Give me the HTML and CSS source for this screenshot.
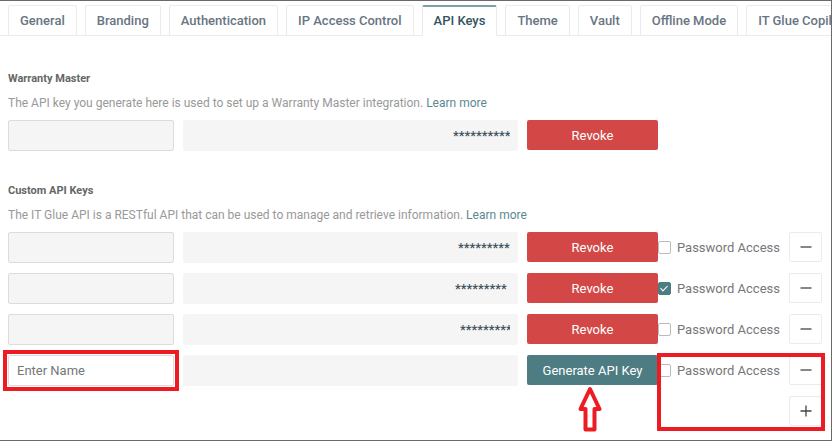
FILE: index.html
```html
<!DOCTYPE html>
<html lang="en">
<head>
  <meta charset="UTF-8">
  <meta name="viewport" content="width=device-width, initial-scale=1.0">
  <title>API Keys - Account Settings</title>
  <link rel="stylesheet" href="styles.css">
</head>
<body>

<nav class="tabs">
  <a class="tab" href="#">General</a>
  <a class="tab" href="#">Branding</a>
  <a class="tab" href="#">Authentication</a>
  <a class="tab" href="#">IP Access Control</a>
  <a class="tab active" href="#">API Keys</a>
  <a class="tab" href="#">Theme</a>
  <a class="tab" href="#">Vault</a>
  <a class="tab" href="#">Offline Mode</a>
  <a class="tab" href="#">IT Glue Copilot</a>
</nav>

<main class="content">
  <section class="section">
    <h2>Warranty Master</h2>
    <p>The API key you generate here is used to set up a Warranty Master integration. <a href="#">Learn more</a></p>
    <div class="key-row">
      <input class="name" type="text" aria-label="Key name" disabled>
      <div class="key"><span class="mask mask-57">**********</span></div>
      <div class="actions">
        <button type="button" class="btn revoke">Revoke</button>
      </div>
    </div>
  </section>

  <section class="section">
    <h2>Custom API Keys</h2>
    <p>The IT Glue API is a RESTful API that can be used to manage and retrieve information. <a href="#">Learn more</a></p>
    <div class="key-row">
      <input class="name" type="text" aria-label="Key name" disabled>
      <div class="key"><span class="mask mask-52">*********</span></div>
      <div class="actions">
        <button type="button" class="btn revoke">Revoke</button>
        <label class="access"><input type="checkbox"> Password Access</label>
      </div>
      <button type="button" class="icon-btn" aria-label="Remove">
        <svg width="12" height="12" viewBox="0 0 12 12"><path d="M.5 6h11"/></svg>
      </button>
    </div>
    <div class="key-row">
      <input class="name" type="text" aria-label="Key name" disabled>
      <div class="key"><span class="mask mask-55">*********</span></div>
      <div class="actions">
        <button type="button" class="btn revoke">Revoke</button>
        <label class="access"><input type="checkbox" checked> Password Access</label>
      </div>
      <button type="button" class="icon-btn" aria-label="Remove">
        <svg width="12" height="12" viewBox="0 0 12 12"><path d="M.5 6h11"/></svg>
      </button>
    </div>
    <div class="key-row">
      <input class="name" type="text" aria-label="Key name" disabled>
      <div class="key"><span class="mask mask-50">*********</span></div>
      <div class="actions">
        <button type="button" class="btn revoke">Revoke</button>
        <label class="access"><input type="checkbox"> Password Access</label>
      </div>
      <button type="button" class="icon-btn" aria-label="Remove">
        <svg width="12" height="12" viewBox="0 0 12 12"><path d="M.5 6h11"/></svg>
      </button>
    </div>
    <div class="new-key">
      <div class="key-row">
        <div class="name-wrap">
          <input class="name" type="text" placeholder="Enter Name" aria-label="Key name">
          <span class="highlight highlight-name"></span>
        </div>
        <div class="key"></div>
        <div class="actions">
          <button type="button" class="btn generate">Generate API Key</button>
          <label class="access"><input type="checkbox"> Password Access</label>
          <svg class="arrow" width="24" height="46" viewBox="0 0 24 46">
            <path d="M12 3 21.500 23H16.500V43.500H7.500V23H2.500Z"/>
          </svg>
        </div>
        <button type="button" class="icon-btn" aria-label="Remove">
          <svg width="12" height="12" viewBox="0 0 12 12"><path d="M.5 6h11"/></svg>
        </button>
      </div>
      <div class="add-row">
        <button type="button" class="icon-btn" aria-label="Add">
          <svg width="12" height="12" viewBox="0 0 12 12"><path d="M.5 6h11M6 .5v11"/></svg>
        </button>
      </div>
      <span class="highlight highlight-access"></span>
    </div>
  </section>
</main>

</body>
</html>
```
FILE: styles.css
```css
* {
  box-sizing: border-box;
}

body {
  margin: 0;
  min-height: 100vh;
  font-family: Roboto, "Liberation Sans", sans-serif;
  background-color: #fff;
  border: 1px solid #6b696b;
  border-left: none;
  overflow-x: hidden;
}

a {
  color: #5c8891;
  text-decoration: none;
}

.tabs {
  display: flex;
  gap: 8px;
  padding: 4px 0 0 8px;
  overflow: hidden;
  box-shadow: inset 0 -1px #ebebeb;
}

.tab {
  flex: none;
  height: 31px;
  padding: 0 11px;
  border: 1px solid #ebebeb;
  border-radius: 2px 2px 0 0;
  font-size: 13px;
  font-weight: 500;
  line-height: 30px;
  color: #687582;
}

.tab.active {
  border-top: 2px solid #7ba0a5;
  border-bottom-color: #fff;
  line-height: 28px;
  color: #34545f;
}

.content {
  padding: 35px 9px 0 8px;
}

.section + .section {
  margin-top: 32px;
}

.section h2 {
  margin: 0;
  font-size: 11px;
  font-weight: 700;
  line-height: 16px;
  color: #666;
}

.section p {
  margin: 8px 0;
  font-size: 12px;
  line-height: 17px;
  color: #999;
}

.key-row {
  display: grid;
  grid-template-columns: 166px 1fr 253px 33px;
  gap: 9px;
  height: 31px;
  margin-bottom: 10px;
}

.name {
  width: 100%;
  height: 31px;
  padding: 0 8px;
  border: 1px solid #dcdcdc;
  border-radius: 2px;
  font-family: inherit;
  font-size: 13px;
  background-color: #fff;
}

.name:disabled {
  background-color: #f5f5f5;
}

.name::placeholder {
  color: #777;
}

.name-wrap {
  position: relative;
}

.key {
  display: flex;
  justify-content: flex-end;
  padding-right: 8px;
  border-radius: 2px;
  background-color: #f5f5f5;
}

.mask {
  overflow: hidden;
  font-size: 13px;
  font-weight: 500;
  line-height: 31px;
  color: #3f525d;
}

.mask-50 {
  width: 50px;
}

.mask-52 {
  width: 52px;
}

.mask-55 {
  width: 55px;
}

.mask-57 {
  width: 57px;
}

.actions {
  position: relative;
  display: flex;
}

.btn {
  width: 131px;
  height: 30px;
  padding: 0;
  border: none;
  border-radius: 2px;
  font-family: inherit;
  font-size: 13px;
  color: #fff;
  cursor: pointer;
}

.revoke {
  background-color: #d34846;
}

.generate {
  background-color: #4d7c82;
}

.access {
  display: flex;
  align-items: center;
  gap: 6px;
  font-size: 13px;
  color: #777;
  white-space: nowrap;
}

.access input {
  appearance: none;
  display: block;
  width: 13px;
  height: 13px;
  margin: 0;
  border: 1px solid #bbb;
  border-radius: 2px;
  background-color: #fff;
}

.access input:checked {
  border-color: #4d7c82;
  background-color: #4d7c82;
}

.access input:checked::after {
  content: "";
  display: block;
  width: 3px;
  height: 6px;
  margin: 1px auto;
  border: solid #fff;
  border-width: 0 1px 1px 0;
  transform: rotate(45deg);
}

.icon-btn {
  display: flex;
  align-items: center;
  justify-content: center;
  width: 33px;
  height: 30px;
  padding: 0;
  border: 1px solid #ebebeb;
  border-radius: 2px;
  background-color: #fff;
  cursor: pointer;
}

.icon-btn svg {
  fill: none;
  stroke: #444;
  stroke-width: 1.3;
}

.new-key {
  position: relative;
}

.add-row {
  display: flex;
  justify-content: flex-end;
}

/* callouts over the new key row */
.highlight {
  position: absolute;
  border: 4px solid #ed1c24;
  pointer-events: none;
}

.highlight-name {
  inset: -5px;
}

.highlight-access {
  top: -2px;
  right: -3px;
  bottom: -5px;
  width: 168px;
}

.arrow {
  position: absolute;
  top: 31px;
  left: 51px;
  fill: #fff;
  stroke: #ed1c24;
  stroke-width: 4;
  stroke-linejoin: round;
}
```
